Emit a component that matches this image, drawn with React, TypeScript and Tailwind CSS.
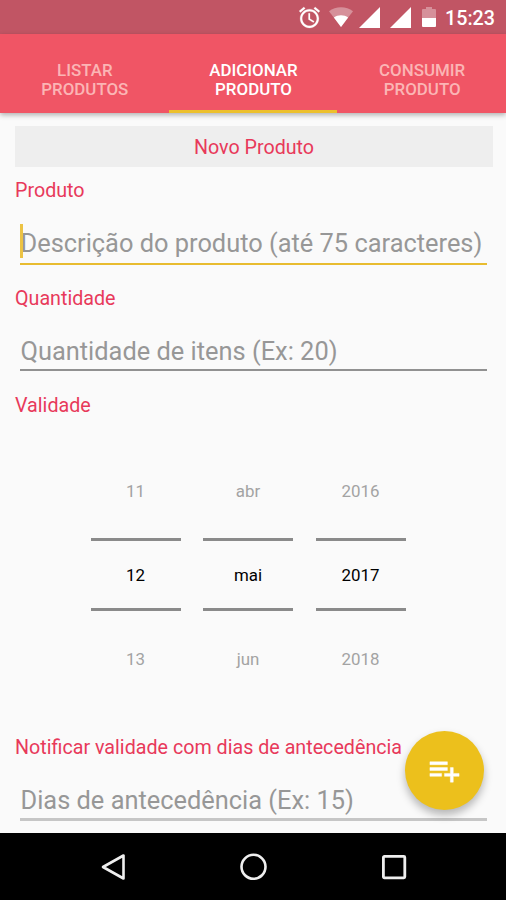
import React from 'react';
import { clsx } from 'clsx';

const tabs = [
  { lines: ['LISTAR', 'PRODUTOS'], active: false },
  { lines: ['ADICIONAR', 'PRODUTO'], active: true },
  { lines: ['CONSUMIR', 'PRODUTO'], active: false },
];

const pickers = [
  ['11', '12', '13'],
  ['abr', 'mai', 'jun'],
  ['2016', '2017', '2018'],
];

function StatusBar() {
  return (
    <div className="h-[34px] shrink-0 bg-[#c15564] flex items-center text-white pl-[297px]">
      {/* Alarm */}
      <svg className="w-[25px] h-[25px] shrink-0" viewBox="0 0 24 24" fill="currentColor" stroke="currentColor" strokeWidth="0.2">
        <path d="M22 5.72l-4.6-3.86-1.29 1.53 4.6 3.86L22 5.72zM7.88 3.39L6.6 1.86 2 5.71l1.29 1.53 4.59-3.85zM12.5 8H11v6l4.75 2.85.75-1.23-4-2.37V8zM12 4c-4.97 0-9 4.03-9 9s4.02 9 9 9c4.97 0 9-4.03 9-9s-4.03-9-9-9zm0 16c-3.87 0-7-3.13-7-7s3.13-7 7-7 7 3.13 7 7-3.13 7-7 7z" />
      </svg>
      {/* Wi-Fi */}
      <svg className="w-6 h-5 shrink-0 ml-[7px]" viewBox="0 0 24 20" fill="currentColor">
        <path opacity="0.35" d="M12 20L0 4.2C3.4 1.6 7.5.3 12 .3s8.600 1.300 12 3.900z" />
        <path d="M12 20L4.900 10.500C6.900 9 9.300 8.300 12 8.300s5.100.7 7.100 2.200z" />
      </svg>
      {/* Signal */}
      <svg className="w-[21px] h-[21px] shrink-0 ml-[6px]" viewBox="0 0 21 21" fill="currentColor">
        <path d="M0 21L21 0v21z" />
      </svg>
      <svg className="w-[21px] h-[21px] shrink-0 ml-[10px]" viewBox="0 0 21 21" fill="currentColor">
        <path d="M0 21L21 0v21z" />
      </svg>
      {/* Battery */}
      <svg className="w-[14px] h-5 shrink-0 ml-[11px]" viewBox="0 0 14 20" fill="currentColor">
        <path opacity="0.35" d="M4 0h6v2h3a1 1 0 0 1 1 1v8H0V3a1 1 0 0 1 1-1h3z" />
        <path d="M0 11h14v8a1 1 0 0 1-1 1H1a1 1 0 0 1-1-1z" />
      </svg>
      <span className="ml-[9px] text-[19.7px] font-medium leading-none pt-[4px]">15:23</span>
    </div>
  );
}

function Label({ children }: { children: React.ReactNode }) {
  return <div className="h-6 px-[15px] text-[19.7px] leading-[26px] text-[#e8395a] whitespace-nowrap">{children}</div>;
}

function Field({ hint, line, focused }: { hint: string; line: string; focused?: boolean }) {
  return (
    <div className={clsx('relative ml-5 mr-[19px] flex flex-col justify-end', line)}>
      {focused && <span className="absolute left-0 bottom-[5px] w-[3px] h-[34px] bg-[#ecc344]" />}
      <span className="pl-[0.5px] text-[25.4px] leading-[30px] text-[#979797] whitespace-nowrap">{hint}</span>
    </div>
  );
}

function Picker({ values }: { values: string[] }) {
  return (
    <div className="w-[90px] text-center text-[16.9px] leading-6">
      <div className="h-[59px] text-[#a3a3a3]">{values[0]}</div>
      <div className="h-[73px] border-y-[3px] border-[#8a8a8a] text-black flex items-center justify-center">{values[1]}</div>
      <div className="h-[61px] pt-[36px] text-[#a3a3a3]">{values[2]}</div>
    </div>
  );
}

export default function App() {
  return (
    <div className="w-[506px] h-[900px] bg-[#fafafa] flex flex-col overflow-hidden font-['Roboto',sans-serif]">
      <StatusBar />

      {/* Tabs */}
      <nav className="h-[79px] shrink-0 bg-[#f05565] grid grid-cols-3 relative shadow-[0_2px_5px_rgba(0,0,0,0.3)]">
        {tabs.map((tab) => (
          <button
            key={tab.lines[0]}
            className={clsx(
              'flex flex-col items-center pt-[27px] pl-px text-[16.9px] font-medium leading-[19px] border-b-[3px]',
              tab.active ? 'text-white border-[#ecc02c]' : 'text-[#fbb5b5] border-transparent'
            )}
          >
            {tab.lines.map((line) => (
              <span key={line}>{line}</span>
            ))}
          </button>
        ))}
      </nav>

      {/* Form */}
      <main className="h-[720px] shrink-0 pt-[13px] relative">
        <h1 className="mx-[15px] mr-[13px] h-[41px] bg-[#eeeeee] text-center text-[19.7px] leading-[44px] text-[#e8395a]">Novo Produto</h1>

        <div className="pt-[11px]">
          <Label>Produto</Label>
          <Field hint="Descrição do produto (até 75 caracteres)" line="h-[63px] pb-[5px] border-b-2 border-[#e8bc30]" focused />
        </div>

        <div className="pt-[21px]">
          <Label>Quantidade</Label>
          <Field hint="Quantidade de itens (Ex: 20)" line="h-[61px] pb-[3px] border-b-2 border-[#919191]" />
        </div>

        <div className="pt-[22px]">
          <Label>Validade</Label>
          <div className="flex gap-[22.5px] pl-[90.5px] pt-[62px]">
            {pickers.map((values) => (
              <Picker key={values[1]} values={values} />
            ))}
          </div>
        </div>

        <div className="pt-[63px]">
          <Label>Notificar validade com dias de antecedência</Label>
          <Field hint="Dias de antecedência (Ex: 15)" line="h-[62px] pb-[3px] border-b-[3px] border-[#c6c6c6]" />
        </div>

        <button
          aria-label="Adicionar"
          className="absolute right-[22px] bottom-[23px] size-[79px] rounded-full bg-[#ecc01c] flex items-center justify-center shadow-[0_5px_9px_rgba(0,0,0,0.28)]"
        >
          <svg className="w-[35px] h-[35px] mr-px text-white" viewBox="0 0 24 24" fill="currentColor" stroke="currentColor" strokeWidth="0.3">
            <path d="M14 10H2v2h12v-2zm0-4H2v2h12V6zm4 8v-4h-2v4h-4v2h4v4h2v-4h4v-2h-4zM2 16h8v-2H2v2z" />
          </svg>
        </button>
      </main>

      {/* System navigation */}
      <footer className="flex-1 bg-black flex items-center justify-between pl-[101px] pr-[99px]">
        <svg className="w-[26px] h-[28px]" viewBox="0 0 26 28" fill="none" stroke="#efefef" strokeWidth="2.6" strokeLinejoin="round">
          <path d="M2 14L22.500 2.500v23z" />
        </svg>
        <svg className="w-[28px] h-[28px]" viewBox="0 0 28 28" fill="none" stroke="#efefef" strokeWidth="2.6">
          <circle cx="13.5" cy="13.8" r="12" />
        </svg>
        <svg className="w-[26px] h-[26px]" viewBox="0 0 26 26" fill="none" stroke="#efefef" strokeWidth="2.8">
          <rect x="2.400" y="2.400" width="21.400" height="21.400" rx="1" />
        </svg>
      </footer>
    </div>
  );
}
